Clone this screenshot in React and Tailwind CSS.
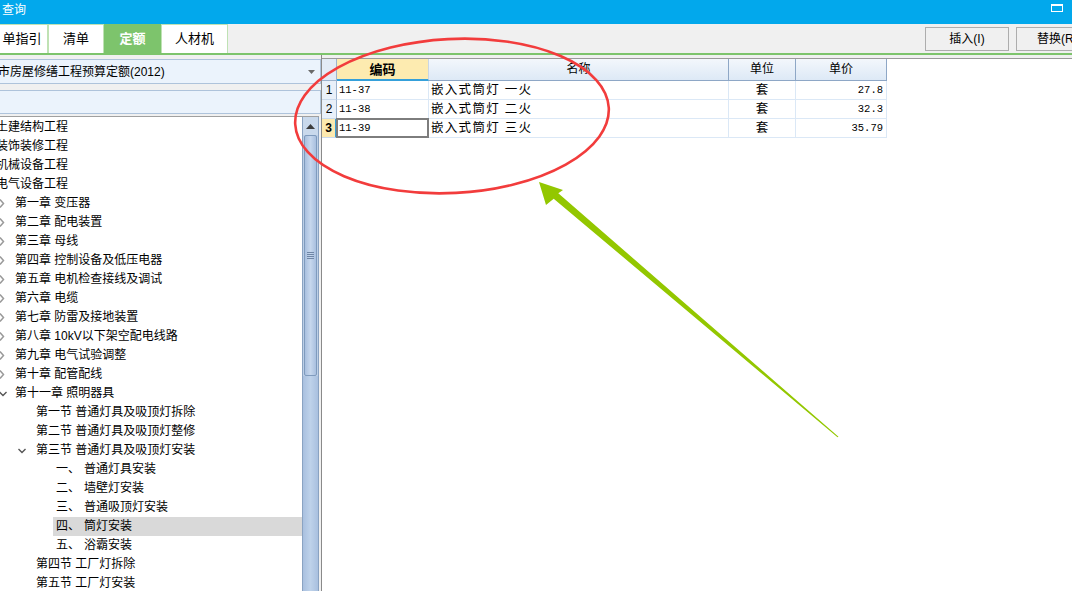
import React from 'react'

const tree = [
  { t: '土建结构工程', l: 0 },
  { t: '装饰装修工程', l: 0 },
  { t: '机械设备工程', l: 0 },
  { t: '电气设备工程', l: 0 },
  { t: '第一章 变压器', l: 1 },
  { t: '第二章 配电装置', l: 1 },
  { t: '第三章 母线', l: 1 },
  { t: '第四章 控制设备及低压电器', l: 1 },
  { t: '第五章 电机检查接线及调试', l: 1 },
  { t: '第六章 电缆', l: 1 },
  { t: '第七章 防雷及接地装置', l: 1 },
  { t: '第八章 10kV以下架空配电线路', l: 1 },
  { t: '第九章 电气试验调整', l: 1 },
  { t: '第十章 配管配线', l: 1 },
  { t: '第十一章 照明器具', l: 1, open: true },
  { t: '第一节 普通灯具及吸顶灯拆除', l: 2 },
  { t: '第二节 普通灯具及吸顶灯整修', l: 2 },
  { t: '第三节 普通灯具及吸顶灯安装', l: 2, open: true },
  { n: '一、', t: '普通灯具安装', l: 3 },
  { n: '二、', t: '墙壁灯安装', l: 3 },
  { n: '三、', t: '普通吸顶灯安装', l: 3 },
  { n: '四、', t: '筒灯安装', l: 3, sel: true },
  { n: '五、', t: '浴霸安装', l: 3 },
  { t: '第四节 工厂灯拆除', l: 2 },
  { t: '第五节 工厂灯安装', l: 2 },
]

const rows = [
  { no: '1', code: '11-37', name: '嵌入式筒灯 一火', unit: '套', price: '27.8' },
  { no: '2', code: '11-38', name: '嵌入式筒灯 二火', unit: '套', price: '32.3' },
  { no: '3', code: '11-39', name: '嵌入式筒灯 三火', unit: '套', price: '35.79', active: true },
]

function Chevron({ open }) {
  return open ? (
    <svg width="8" height="19" viewBox="0 0 8 19" className="shrink-0">
      <path d="M0.5 8 L4 11.5 L7.5 8" fill="none" stroke="#555" strokeWidth="1.4" />
    </svg>
  ) : (
    <svg width="8" height="19" viewBox="0 0 8 19" className="shrink-0">
      <path d="M1 5.5 L4.5 9.5 L1 13.5" fill="none" stroke="#9a9a9a" strokeWidth="1.5" />
    </svg>
  )
}

function TreeRow({ item }) {
  if (item.l === 0) {
    return <div className="h-[19px] leading-[19px] ml-[-4px]">{item.t}</div>
  }
  if (item.l === 1) {
    return (
      <div className="h-[19px] leading-[19px] flex items-center">
        <div className="w-[16px] ml-[-1px] flex">
          <Chevron open={item.open} />
        </div>
        <span>{item.t}</span>
      </div>
    )
  }
  if (item.l === 2) {
    return (
      <div className="h-[19px] leading-[19px] flex items-center pl-[18px]">
        <div className="w-[18px] flex">{item.open && <Chevron open />}</div>
        <span>{item.t}</span>
      </div>
    )
  }
  return (
    <div className={`h-[19px] leading-[19px] flex items-center ml-[53px] pl-[3px] ${item.sel ? 'bg-[#d9d9d9]' : ''}`}>
      <span className="w-[28px]">{item.n}</span>
      <span>{item.t}</span>
    </div>
  )
}

export default function App() {
  return (
    <div className="relative w-[1072px] h-[591px] overflow-hidden bg-[#f0f0f0] text-[12px] text-black font-['Liberation_Sans','Noto_Sans_CJK_SC',sans-serif]">
      {/* 标题栏 */}
      <div className="h-[24px] bg-[#02a8ec] flex items-start justify-between pt-[3px] pl-[2px] pr-[9px]">
        <span className="text-white text-[12px] leading-[14px]">查询</span>
        <div className="w-[12px] h-[8px] mt-[1px] border border-white border-t-[2px]"></div>
      </div>

      {/* 页签 */}
      <div className="h-[31px] flex items-end justify-between border-b-2 border-[#7dc46c]">
        <div className="flex h-[29px] ml-[-10px]">
          {['单指引', '清单', '定额', '人材机'].map((t, i) => (
            <div
              key={t}
              className={`h-full flex items-center justify-center border border-b-0 text-[13px] ${
                i === 2
                  ? 'bg-[#7dc46c] border-[#7dc46c] text-white font-bold'
                  : 'bg-white border-[#bfe2b4]'
              } ${i === 0 ? 'w-[58px] pl-[6px]' : i === 1 ? 'w-[56px]' : i === 2 ? 'w-[57px]' : 'w-[67px]'}`}
            >
              {t}
            </div>
          ))}
        </div>
        <div className="flex gap-[7px] mb-[2px] mr-[-30px]">
          <button className="w-[84px] h-[24px] border border-[#adadad] bg-[#f0f0f0] text-[12px]">插入(I)</button>
          <button className="w-[86px] h-[24px] border border-[#adadad] bg-[#f0f0f0] text-[12px] text-left pl-[20px]">替换(R)</button>
        </div>
      </div>

      {/* 主体 */}
      <div className="flex h-[536px]">
        {/* 左侧 */}
        <div className="w-[321px] flex flex-col pt-[4px]">
          <div className="h-[25px] bg-[#ebf3fc] border border-[#aec3db] border-l-0 flex items-center justify-between pr-[5px]">
            <span className="ml-[-2px] mt-[1px]">市房屋修缮工程预算定额(2012)</span>
            <svg width="7" height="4" viewBox="0 0 7 4"><path d="M0 0 H7 L3.5 4 Z" fill="#6a6a6a" /></svg>
          </div>
          <div className="h-[24px] mt-[6px] bg-[#ebf3fc] border border-[#aec3db] border-l-0"></div>
          <div className="flex-1 mt-[2px] flex border-t border-[#a0a0a0] w-[319px] overflow-hidden">
            <div className="w-[302px] pt-[1px] bg-white overflow-hidden whitespace-nowrap">
              {tree.map((item, i) => (
                <TreeRow key={i} item={item} />
              ))}
            </div>
            {/* 滚动条 */}
            <div className="w-[17px] flex flex-col bg-[#bccfe7] border-l border-[#8aa3c2] border-r border-r-[#8aa3c2]">
              <div className="h-[18px] flex items-center justify-center bg-[#c9d9ec]">
                <svg width="9" height="5" viewBox="0 0 9 5"><path d="M0 5 L4.5 0 L9 5 Z" fill="#3c3c3c" /></svg>
              </div>
              <div className="h-[241px] mx-[1px] border border-[#7f9bbd] rounded-[2px] bg-gradient-to-r from-[#a9c0df] via-[#c6d7ed] to-[#a9c0df] flex items-center justify-center">
                <div className="flex flex-col gap-[1px] w-[7px]">
                  <div className="h-[1px] bg-[#6f86a6]"></div>
                  <div className="h-[1px] bg-[#6f86a6]"></div>
                  <div className="h-[1px] bg-[#6f86a6]"></div>
                  <div className="h-[1px] bg-[#6f86a6]"></div>
                </div>
              </div>
              <div className="flex-1 bg-gradient-to-r from-[#a9c0df] via-[#bed2ea] to-[#a9c0df]"></div>
            </div>
          </div>
        </div>

        {/* 分隔 */}
        <div className="w-[1px] bg-[#8a8a8a]"></div>

        {/* 右侧表格 */}
        <div className="flex-1 mt-[3px] bg-white border-t border-[#9a9a9a]">
          <div className="flex h-[22px] leading-[21px]">
            <div className="w-[15px] bg-[#e2ebf6] border-r border-b border-[#9db3cd]"></div>
            <div className="w-[92px] bg-[#fdebb0] border-b-2 border-[#35a0da] border-r border-r-[#c9d6e4] text-center font-bold text-[13px]">编码</div>
            <div className="w-[300px] bg-gradient-to-b from-[#f3f7fc] to-[#dde9f6] border-r border-b border-[#8ea7c6] text-center">名称</div>
            <div className="w-[67px] bg-gradient-to-b from-[#f3f7fc] to-[#dde9f6] border-r border-b border-[#8ea7c6] text-center">单位</div>
            <div className="w-[91px] bg-gradient-to-b from-[#f3f7fc] to-[#dde9f6] border-r border-b border-[#8ea7c6] text-center">单价</div>
          </div>
          {rows.map((r) => (
            <div key={r.no} className="flex h-[19px] leading-[19px]">
              <div
                className={`w-[15px] text-center border-b border-[#c9d9ec] ${
                  r.active
                    ? 'bg-[#fde9ae] font-bold border-r-2 border-r-[#35a0da]'
                    : 'bg-[#e9f0f9] border-r border-r-[#9db3cd]'
                }`}
              >
                {r.no}
              </div>
              <div className="relative w-[92px] pl-[2px] border-r border-b border-[#dbe8f6] font-['Liberation_Mono',monospace] text-[10.5px]">
                {r.code}
                {r.active && <div className="absolute left-[-1px] top-[-1px] right-[-1px] bottom-[-1px] border-2 border-[#7d7d7d]"></div>}
              </div>
              <div className="w-[300px] pl-[2px] border-r border-b border-[#dbe8f6] whitespace-pre tracking-[1.3px] text-[12.5px]">{r.name}</div>
              <div className="w-[67px] text-center border-r border-b border-[#dbe8f6] text-[12.5px]">{r.unit}</div>
              <div className="w-[91px] text-right pr-[3px] border-r border-b border-[#dbe8f6] font-['Liberation_Mono',monospace] text-[10.5px]">{r.price}</div>
            </div>
          ))}
        </div>
      </div>

      {/* 标注 */}
      <svg className="absolute inset-0 pointer-events-none" width="1072" height="591" viewBox="0 0 1072 591">
        <ellipse cx="452" cy="116" rx="157" ry="77" transform="rotate(-3 452 116)" fill="none" stroke="#f23c3c" strokeWidth="2.6" />
        <polygon
          points="539,182 563,190 558.3,193.3 838.5,436.7 837.5,437.3 553.7,198.7 546,205"
          fill="#93c700"
        />
      </svg>
    </div>
  )
}
